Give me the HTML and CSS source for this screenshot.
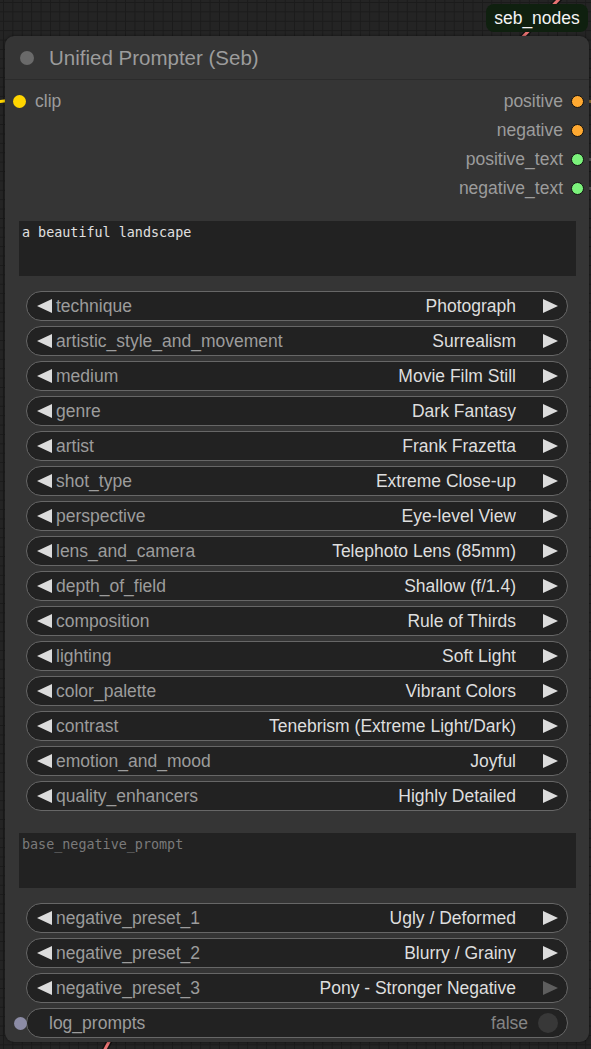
FILE: index.html
```html
<!DOCTYPE html>
<html>
<head>
<meta charset="utf-8">
<link rel="stylesheet" href="styles.css">
</head>
<body>
<div class="canvas">
  <svg class="wires" width="591" height="1049" viewBox="0 0 591 1049">
    <line x1="561" y1="-3" x2="518" y2="42" stroke="#111" stroke-width="6"/>
    <line x1="561" y1="-3" x2="518" y2="42" stroke="#e87272" stroke-width="3"/>
    <line x1="111" y1="1038" x2="103" y2="1053" stroke="#111" stroke-width="6"/>
    <line x1="111" y1="1038" x2="103" y2="1053" stroke="#e87272" stroke-width="3"/>
    <line x1="-4" y1="102" x2="12" y2="100" stroke="#ffd500" stroke-width="3"/>
    <line x1="584" y1="101" x2="596" y2="102" stroke="#8a6a30" stroke-width="3"/>
    <line x1="584" y1="159" x2="596" y2="160" stroke="#555" stroke-width="3"/>
    <line x1="584" y1="188" x2="596" y2="189" stroke="#555" stroke-width="3"/>
  </svg>
  <div class="badge">seb_nodes</div>
  <div class="node">
    <div class="title"><span class="title-dot"></span><span class="title-text">Unified Prompter (Seb)</span></div>
    <div class="slots">
      <div class="inputs">
        <div class="slot slot-in"><span class="dot dot-yellow"></span><span>clip</span></div>
      </div>
      <div class="outputs">
        <div class="slot slot-out"><span>positive</span><span class="dot dot-orange"></span></div>
        <div class="slot slot-out"><span>negative</span><span class="dot dot-orange"></span></div>
        <div class="slot slot-out"><span>positive_text</span><span class="dot dot-green"></span></div>
        <div class="slot slot-out"><span>negative_text</span><span class="dot dot-green"></span></div>
      </div>
    </div>
    <div class="textarea">a beautiful landscape</div>
    <div class="combos">
      <div class="combo"><svg class="arrow" viewBox="0 0 15 14"><polygon points="15,0 0,7 15,14"/></svg><span class="label">technique</span><span class="value">Photograph</span><svg class="arrow arrow-r" viewBox="0 0 15 14"><polygon points="0,0 15,7 0,14"/></svg></div>
      <div class="combo"><svg class="arrow" viewBox="0 0 15 14"><polygon points="15,0 0,7 15,14"/></svg><span class="label">artistic_style_and_movement</span><span class="value">Surrealism</span><svg class="arrow arrow-r" viewBox="0 0 15 14"><polygon points="0,0 15,7 0,14"/></svg></div>
      <div class="combo"><svg class="arrow" viewBox="0 0 15 14"><polygon points="15,0 0,7 15,14"/></svg><span class="label">medium</span><span class="value">Movie Film Still</span><svg class="arrow arrow-r" viewBox="0 0 15 14"><polygon points="0,0 15,7 0,14"/></svg></div>
      <div class="combo"><svg class="arrow" viewBox="0 0 15 14"><polygon points="15,0 0,7 15,14"/></svg><span class="label">genre</span><span class="value">Dark Fantasy</span><svg class="arrow arrow-r" viewBox="0 0 15 14"><polygon points="0,0 15,7 0,14"/></svg></div>
      <div class="combo"><svg class="arrow" viewBox="0 0 15 14"><polygon points="15,0 0,7 15,14"/></svg><span class="label">artist</span><span class="value">Frank Frazetta</span><svg class="arrow arrow-r" viewBox="0 0 15 14"><polygon points="0,0 15,7 0,14"/></svg></div>
      <div class="combo"><svg class="arrow" viewBox="0 0 15 14"><polygon points="15,0 0,7 15,14"/></svg><span class="label">shot_type</span><span class="value">Extreme Close-up</span><svg class="arrow arrow-r" viewBox="0 0 15 14"><polygon points="0,0 15,7 0,14"/></svg></div>
      <div class="combo"><svg class="arrow" viewBox="0 0 15 14"><polygon points="15,0 0,7 15,14"/></svg><span class="label">perspective</span><span class="value">Eye-level View</span><svg class="arrow arrow-r" viewBox="0 0 15 14"><polygon points="0,0 15,7 0,14"/></svg></div>
      <div class="combo"><svg class="arrow" viewBox="0 0 15 14"><polygon points="15,0 0,7 15,14"/></svg><span class="label">lens_and_camera</span><span class="value">Telephoto Lens (85mm)</span><svg class="arrow arrow-r" viewBox="0 0 15 14"><polygon points="0,0 15,7 0,14"/></svg></div>
      <div class="combo"><svg class="arrow" viewBox="0 0 15 14"><polygon points="15,0 0,7 15,14"/></svg><span class="label">depth_of_field</span><span class="value">Shallow (f/1.4)</span><svg class="arrow arrow-r" viewBox="0 0 15 14"><polygon points="0,0 15,7 0,14"/></svg></div>
      <div class="combo"><svg class="arrow" viewBox="0 0 15 14"><polygon points="15,0 0,7 15,14"/></svg><span class="label">composition</span><span class="value">Rule of Thirds</span><svg class="arrow arrow-r" viewBox="0 0 15 14"><polygon points="0,0 15,7 0,14"/></svg></div>
      <div class="combo"><svg class="arrow" viewBox="0 0 15 14"><polygon points="15,0 0,7 15,14"/></svg><span class="label">lighting</span><span class="value">Soft Light</span><svg class="arrow arrow-r" viewBox="0 0 15 14"><polygon points="0,0 15,7 0,14"/></svg></div>
      <div class="combo"><svg class="arrow" viewBox="0 0 15 14"><polygon points="15,0 0,7 15,14"/></svg><span class="label">color_palette</span><span class="value">Vibrant Colors</span><svg class="arrow arrow-r" viewBox="0 0 15 14"><polygon points="0,0 15,7 0,14"/></svg></div>
      <div class="combo"><svg class="arrow" viewBox="0 0 15 14"><polygon points="15,0 0,7 15,14"/></svg><span class="label">contrast</span><span class="value">Tenebrism (Extreme Light/Dark)</span><svg class="arrow arrow-r" viewBox="0 0 15 14"><polygon points="0,0 15,7 0,14"/></svg></div>
      <div class="combo"><svg class="arrow" viewBox="0 0 15 14"><polygon points="15,0 0,7 15,14"/></svg><span class="label">emotion_and_mood</span><span class="value">Joyful</span><svg class="arrow arrow-r" viewBox="0 0 15 14"><polygon points="0,0 15,7 0,14"/></svg></div>
      <div class="combo"><svg class="arrow" viewBox="0 0 15 14"><polygon points="15,0 0,7 15,14"/></svg><span class="label">quality_enhancers</span><span class="value">Highly Detailed</span><svg class="arrow arrow-r" viewBox="0 0 15 14"><polygon points="0,0 15,7 0,14"/></svg></div>
    </div>
    <div class="textarea textarea-2"><span class="placeholder">base_negative_prompt</span></div>
    <div class="combos combos-neg">
      <div class="combo"><svg class="arrow" viewBox="0 0 15 14"><polygon points="15,0 0,7 15,14"/></svg><span class="label">negative_preset_1</span><span class="value">Ugly / Deformed</span><svg class="arrow arrow-r" viewBox="0 0 15 14"><polygon points="0,0 15,7 0,14"/></svg></div>
      <div class="combo"><svg class="arrow" viewBox="0 0 15 14"><polygon points="15,0 0,7 15,14"/></svg><span class="label">negative_preset_2</span><span class="value">Blurry / Grainy</span><svg class="arrow arrow-r" viewBox="0 0 15 14"><polygon points="0,0 15,7 0,14"/></svg></div>
      <div class="combo"><svg class="arrow" viewBox="0 0 15 14"><polygon points="15,0 0,7 15,14"/></svg><span class="label">negative_preset_3</span><span class="value">Pony - Stronger Negative</span><svg class="arrow arrow-r arrow-dim" viewBox="0 0 15 14"><polygon points="0,0 15,7 0,14"/></svg></div>
      <div class="combo toggle"><span class="dot dot-input"></span><span class="label">log_prompts</span><span class="value value-false">false</span><span class="knob"></span></div>
    </div>
  </div>
</div>
</body>
</html>
```

FILE: styles.css
```css
* { box-sizing: border-box; }
html, body { margin: 0; padding: 0; }
body {
  width: 591px;
  height: 1049px;
  overflow: hidden;
  font-family: "Liberation Sans", Arial, sans-serif;
}
.canvas {
  position: relative;
  width: 591px;
  height: 1049px;
  padding: 36px 0 0 5px;
  background-color: #242424;
  background-image:
    linear-gradient(to right, #1b1b1b 1px, transparent 1px),
    linear-gradient(to bottom, #1b1b1b 1px, transparent 1px);
  background-size: 9.4px 9.4px;
  background-position: 3px 2px;
}
.wires {
  position: absolute;
  left: 0;
  top: 0;
  z-index: 0;
}
.badge {
  position: absolute;
  top: 4px;
  left: 486px;
  width: 102px;
  height: 28px;
  border-radius: 8px;
  background: #0f200f;
  color: #f4f4f4;
  font-size: 17.5px;
  line-height: 28px;
  text-align: center;
  z-index: 2;
}
.node {
  position: relative;
  z-index: 1;
  width: 584px;
  height: 1006px;
  background: #353535;
  border-radius: 9px;
  box-shadow: 0 0 3px rgba(0, 0, 0, 0.55);
  padding-bottom: 4px;
}
.title {
  height: 44px;
  display: flex;
  align-items: center;
  padding-left: 15px;
  gap: 15px;
  border-bottom: 1px solid #2b2b2b;
}
.title-dot {
  width: 14px;
  height: 14px;
  border-radius: 50%;
  background: #6a6a6a;
}
.title-text {
  color: #9c9c9c;
  font-size: 20.5px;
  margin-top: 1px;
}
.slots {
  display: flex;
  justify-content: space-between;
  padding-top: 7px;
  height: 123px;
}
.inputs, .outputs {
  display: flex;
  flex-direction: column;
}
.slot {
  height: 29px;
  display: flex;
  align-items: center;
  color: #9c9c9c;
  font-size: 17.5px;
}
.slot-in { padding-left: 8px; gap: 9px; }
.slot-out { justify-content: flex-end; padding-right: 5px; gap: 8px; }
.dot {
  width: 13px;
  height: 13px;
  border-radius: 50%;
  flex: none;
}
.dot-yellow { background: #ffd500; }
.dot-orange { background: #ffa931; border: 1.5px solid #111; }
.dot-green { background: #7bf27b; border: 1.5px solid #111; }
.textarea {
  margin: 18px 13px 0 14px;
  height: 55px;
  background: #222;
  color: #e0e0e0;
  font-family: "DejaVu Sans Mono", "Liberation Mono", monospace;
  font-size: 13.4px;
  line-height: 16px;
  padding: 4px 3px;
}
.placeholder { color: #7a7a7a; }
.textarea-2 { margin-top: 22px; }
.combos {
  display: flex;
  flex-direction: column;
  gap: 5px;
  margin: 15px 21px 0 21px;
}
.combo {
  position: relative;
  height: 30px;
  border: 1px solid #676767;
  border-radius: 15px;
  background: #222;
  display: flex;
  align-items: center;
  padding: 0 9px 0 10px;
  font-size: 17.5px;
}
.arrow {
  width: 15px;
  height: 14px;
  fill: #dcdcdc;
  flex: none;
}
.arrow-r { margin-left: 27px; }
.arrow-dim { fill: #5e5e5e; }
.label {
  color: #9c9c9c;
  margin-left: 4px;
  white-space: nowrap;
}
.value {
  color: #dedede;
  margin-left: auto;
  white-space: nowrap;
}
.toggle { padding-left: 22px; }
.toggle .label { margin-left: 0; }
.value-false { color: #858585; }
.knob {
  width: 20px;
  height: 20px;
  border-radius: 50%;
  background: #383838;
  margin-left: 10px;
  flex: none;
}
.dot-input {
  position: absolute;
  left: -13px;
  top: 8px;
  background: #8c8ca6;
}
```
